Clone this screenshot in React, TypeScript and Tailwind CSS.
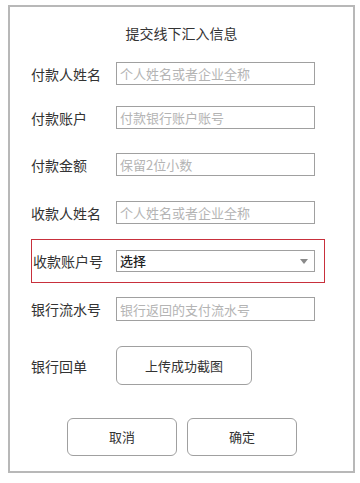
import type { ReactNode } from "react";

const font = { fontFamily: '"Noto Sans CJK SC", "Noto Sans", sans-serif' };

const Row = ({ label, children, className = "" }: { label: string; children: ReactNode; className?: string }) => (
  <div className={`flex items-center pl-[21px] ${className}`}>
    <span className="w-[85px] shrink-0 text-[14px] leading-[20px] text-[#333]">{label}</span>
    {children}
  </div>
);

const Field = ({ placeholder, h = "h-[23px]" }: { placeholder: string; h?: string }) => (
  <input
    readOnly
    placeholder={placeholder}
    className={`w-[199px] ${h} border border-[#a0a0a0] pl-[3px] text-[13px] text-[#333] placeholder:text-[#b4b4b4] outline-none`}
  />
);

export default function App() {
  return (
    <div className="w-[360px] h-[483px] bg-white pt-[5px] pl-[8px]" style={font}>
      <div className="w-[347px] h-[468px] border-2 border-[#b8b8b8] flex flex-col">
        <h1 className="pt-[16px] text-center text-[14px] leading-[20px] text-[#333]">提交线下汇入信息</h1>

        <Row label="付款人姓名" className="mt-[19px]">
          <Field placeholder="个人姓名或者企业全称" />
        </Row>
        <Row label="付款账户" className="mt-[21px]">
          <Field placeholder="付款银行账户账号" />
        </Row>
        <Row label="付款金额" className="mt-[24px]">
          <Field placeholder="保留2位小数" />
        </Row>
        <Row label="收款人姓名" className="mt-[25px]">
          <Field placeholder="个人姓名或者企业全称" />
        </Row>

        {/* highlighted select row */}
        <div className="ml-[21px] mt-[15px] w-[294px] h-[44px] border border-[#c8303c] flex items-center pl-[1px]">
          <span className="w-[83px] shrink-0 text-[14px] leading-[20px] text-[#333]">收款账户号</span>
          <div className="w-[199px] h-[22px] border border-[#a0a0a0] flex items-center justify-between pl-[3px] pr-[6px]">
            <span className="text-[13px] leading-[18px] font-medium text-[#222]">选择</span>
            <svg width="8" height="5" viewBox="0 0 8 5">
              <path d="M0 0h8L4 5z" fill="#8a8a8a" />
            </svg>
          </div>
        </div>

        <Row label="银行流水号" className="mt-[14px]">
          <Field placeholder="银行返回的支付流水号" h="h-[24px]" />
        </Row>

        <Row label="银行回单" className="mt-[25px]">
          <button className="w-[136px] h-[39px] rounded-[6px] border border-[#a0a0a0] text-[13px] text-[#333]">
            上传成功截图
          </button>
        </Row>

        <div className="flex gap-[10px] ml-[57px] mt-[33px]">
          <button className="w-[110px] h-[38px] rounded-[6px] border border-[#a0a0a0] text-[13px] text-[#333]">取消</button>
          <button className="w-[110px] h-[38px] rounded-[6px] border border-[#a0a0a0] text-[13px] text-[#333]">确定</button>
        </div>
      </div>
    </div>
  );
}
